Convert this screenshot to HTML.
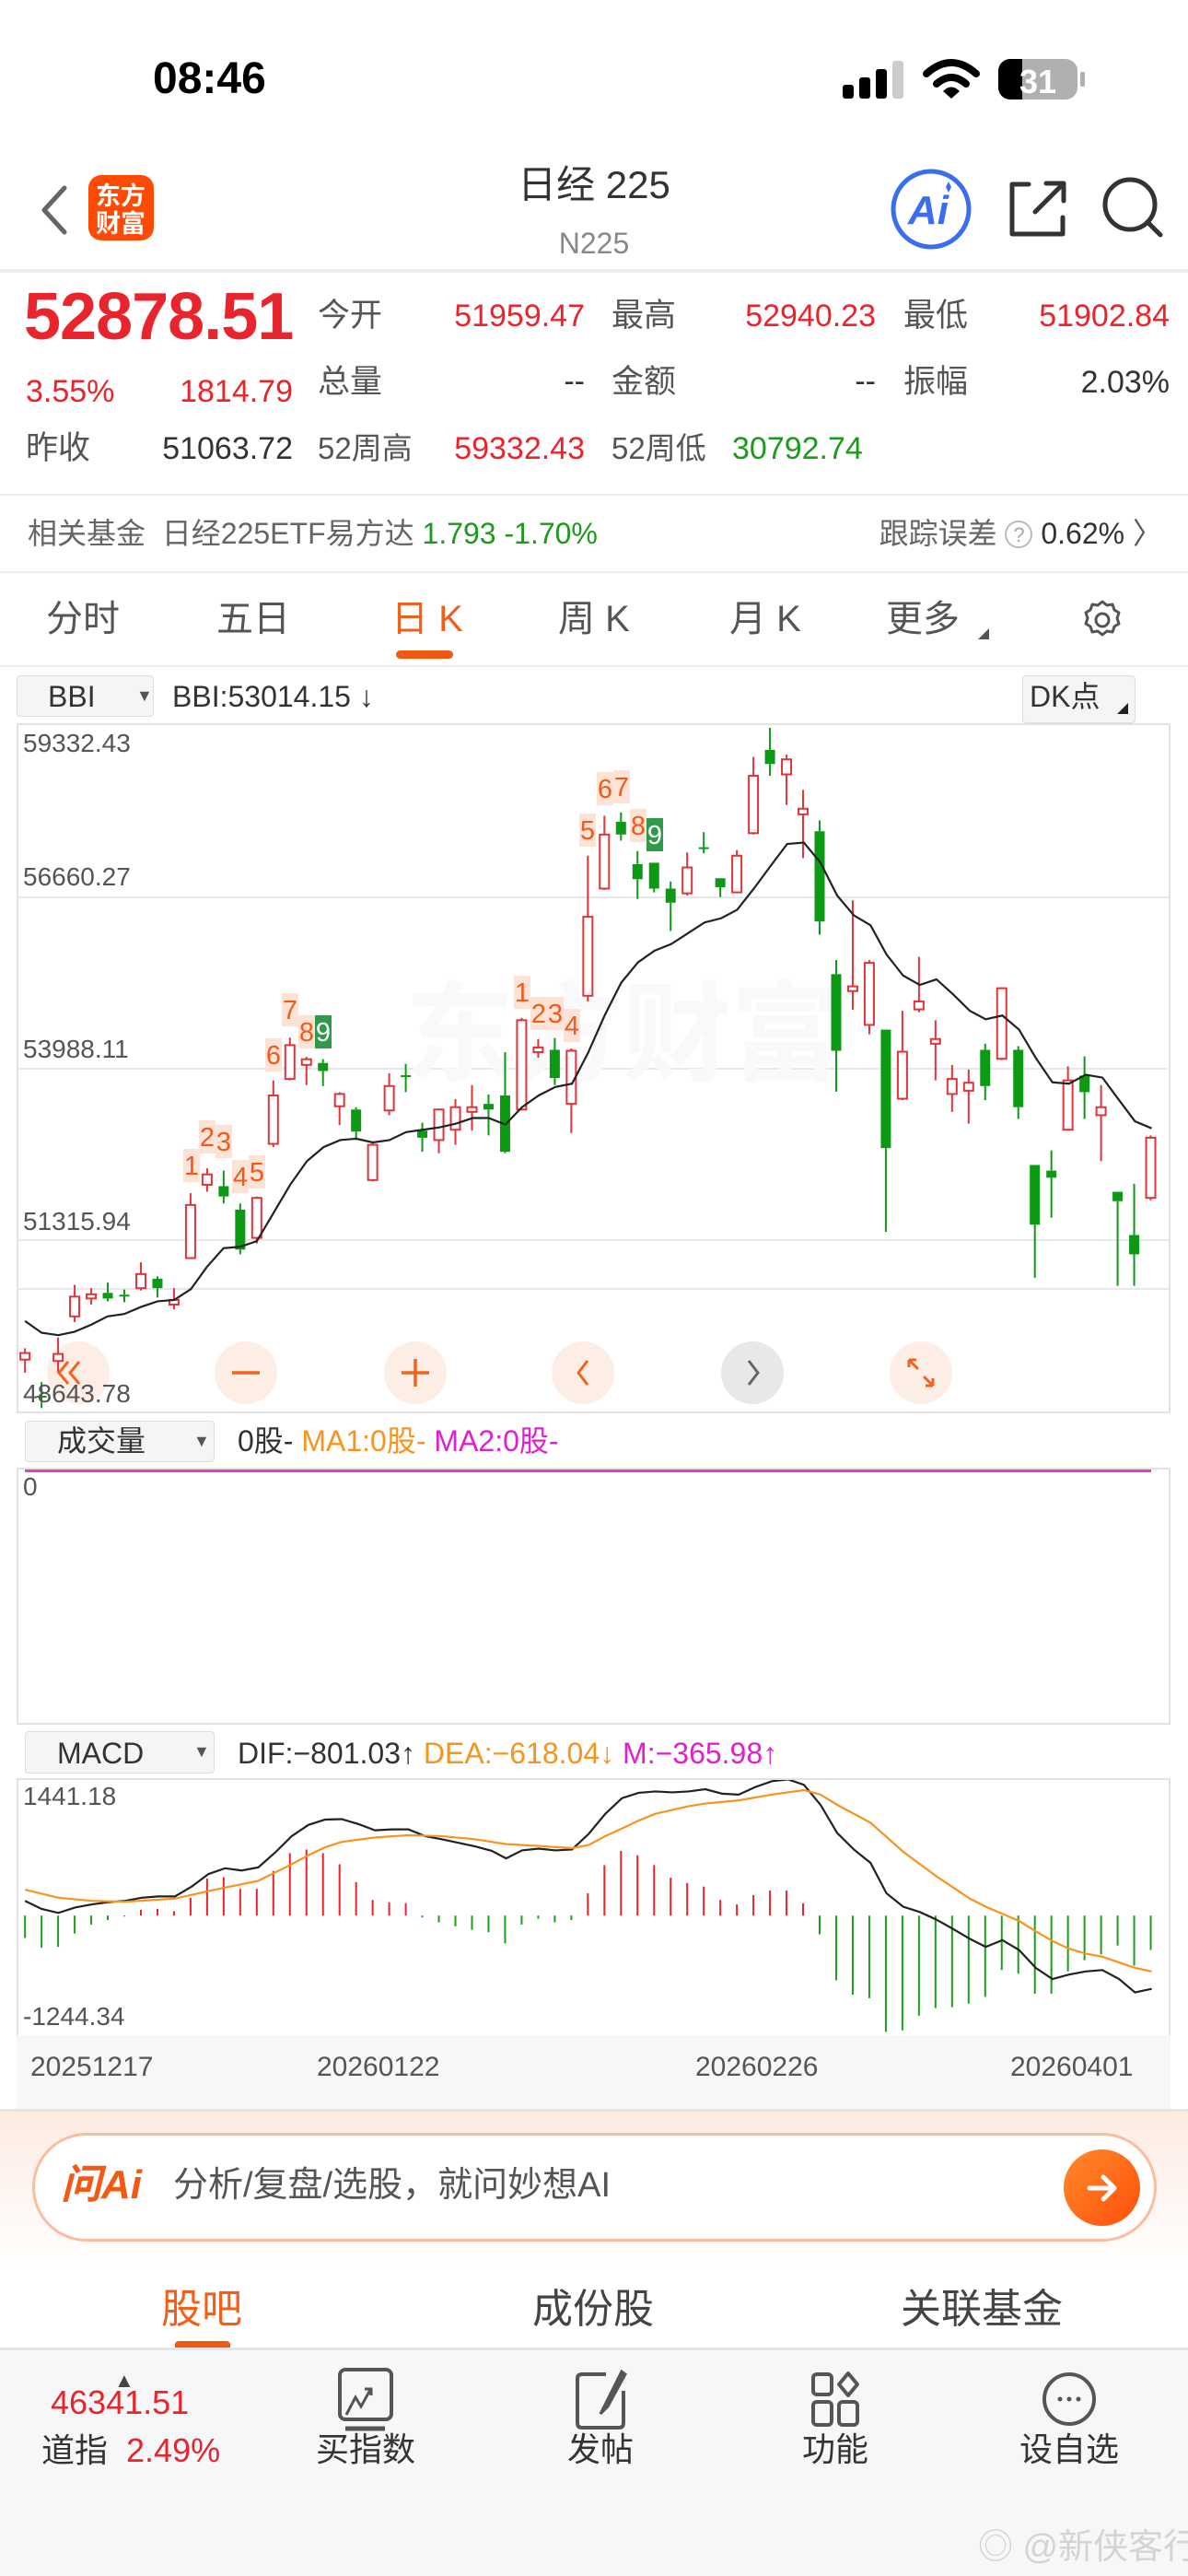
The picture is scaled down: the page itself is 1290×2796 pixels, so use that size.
<!DOCTYPE html>
<html><head><meta charset="utf-8">
<style>
*{margin:0;padding:0;box-sizing:border-box}
body{width:1290px;height:2796px;position:relative;background:#fff;font-family:"Liberation Sans","Noto Sans CJK SC",sans-serif;overflow:hidden;color:#333}
.a{position:absolute;white-space:nowrap;line-height:1}
.r{color:#e8242c}.g{color:#1c9a1c}.gy{color:#666}
</style></head><body>

<div class="a" style="left:166px;top:62px;font-size:48px;font-weight:bold;color:#000">08:46</div>
<svg class="a" style="left:0;top:0" width="1290" height="300">
  <rect x="915" y="92" width="12" height="15" rx="3" fill="#000"/>
  <rect x="933" y="84" width="12" height="23" rx="3" fill="#000"/>
  <rect x="951" y="75" width="12" height="32" rx="3" fill="#000"/>
  <rect x="969" y="66" width="12" height="41" rx="3" fill="#ccc"/>
  <path d="M1006 80 Q1033 56 1060 80" stroke="#000" stroke-width="8" fill="none" stroke-linecap="round"/>
  <path d="M1017 91 Q1033 77 1049 91" stroke="#000" stroke-width="8" fill="none" stroke-linecap="round"/>
  <path d="M1024 99 L1033 107 L1042 99 Q1033 90 1024 99Z" fill="#000"/>
  <rect x="1084" y="64" width="86" height="44" rx="13" fill="#b0b0b0"/>
  <path d="M1097 64 H1110 V108 H1097 A13 13 0 0 1 1084 95 V77 A13 13 0 0 1 1097 64Z" fill="#000"/>
  <rect x="1173" y="78" width="5" height="16" rx="2" fill="#b0b0b0"/>
  <text x="1127" y="101" font-size="36" font-weight="bold" fill="#fff" text-anchor="middle" font-family="Liberation Sans">31</text>
  <path d="M70 204 L48 228 L70 252" stroke="#666" stroke-width="5" fill="none" stroke-linecap="round" stroke-linejoin="round"/>
  <rect x="96" y="190" width="71" height="71" rx="14" fill="#fd4a05"/>
  <text x="131" y="222" font-size="27" font-weight="bold" fill="#fff" text-anchor="middle" font-family="Noto Sans CJK SC">东方</text>
  <text x="131" y="252" font-size="27" font-weight="bold" fill="#fff" text-anchor="middle" font-family="Noto Sans CJK SC">财富</text>
  <circle cx="1011" cy="227" r="41" stroke="#3a6df0" stroke-width="5" fill="none"/>
  <text x="1008" y="243" font-size="44" font-weight="bold" font-style="italic" fill="#3a6df0" text-anchor="middle" font-family="Liberation Sans">Ai</text>
  <path d="M1027 203 l3 -6 l3 6 l-3 6z" fill="#3a6df0"/>
  <path d="M1117 200 H1099 V254 H1154 V236 M1124 230 L1153 201 M1136 199 H1155 V218" stroke="#333" stroke-width="5" fill="none" stroke-linecap="round" stroke-linejoin="round"/>
  <circle cx="1227" cy="222" r="27" stroke="#333" stroke-width="5" fill="none"/>
  <path d="M1246 241 L1260 255" stroke="#333" stroke-width="5" stroke-linecap="round"/>
</svg>
<div class="a" style="left:0;width:1290px;top:180px;text-align:center;font-size:42px;color:#333">日经 225</div>
<div class="a" style="left:0;width:1290px;top:248px;text-align:center;font-size:32px;color:#888">N225</div>
<div class="a" style="left:0;top:292px;width:1290px;height:4px;background:#eee"></div>

<div class="a r" style="left:26px;top:308px;font-size:72px;font-weight:bold;letter-spacing:-1px">52878.51</div>
<div class="a" style="left:345px;top:325px;font-size:35px;color:#555">今开</div>
<div class="a r" style="right:655px;top:326px;font-size:34px">51959.47</div>
<div class="a" style="left:664px;top:325px;font-size:35px;color:#555">最高</div>
<div class="a r" style="right:339px;top:326px;font-size:34px">52940.23</div>
<div class="a" style="left:981px;top:325px;font-size:35px;color:#555">最低</div>
<div class="a r" style="right:20px;top:326px;font-size:34px">51902.84</div>

<div class="a r" style="left:28px;top:408px;font-size:34px">3.55%</div>
<div class="a r" style="right:972px;top:408px;font-size:34px">1814.79</div>
<div class="a" style="left:345px;top:397px;font-size:35px;color:#555">总量</div>
<div class="a" style="right:655px;top:397px;font-size:34px;color:#333">--</div>
<div class="a" style="left:664px;top:397px;font-size:35px;color:#555">金额</div>
<div class="a" style="right:339px;top:397px;font-size:34px;color:#333">--</div>
<div class="a" style="left:981px;top:397px;font-size:35px;color:#555">振幅</div>
<div class="a" style="right:20px;top:398px;font-size:34px;color:#333">2.03%</div>

<div class="a" style="left:28px;top:469px;font-size:35px;color:#555">昨收</div>
<div class="a" style="right:972px;top:470px;font-size:34px;color:#333">51063.72</div>
<div class="a" style="left:345px;top:470px;font-size:33px;color:#555">52周高</div>
<div class="a r" style="right:655px;top:470px;font-size:34px">59332.43</div>
<div class="a" style="left:664px;top:470px;font-size:33px;color:#555">52周低</div>
<div class="a g" style="left:795px;top:470px;font-size:34px">30792.74</div>
<div class="a" style="left:0;top:536px;width:1290px;height:2px;background:#eee"></div>

<div class="a" style="left:30px;top:563px;font-size:32px;color:#666">相关基金&nbsp; 日经225ETF易方达 <span class="g">1.793 -1.70%</span></div>
<div class="a" style="right:28px;top:563px;font-size:32px;color:#666">跟踪误差 <span style="display:inline-block;width:30px;height:30px;border:2px solid #bbb;border-radius:50%;font-size:22px;text-align:center;line-height:27px;color:#aaa;vertical-align:2px">?</span> <span style="color:#333">0.62%</span> <span style="color:#555">〉</span></div>
<div class="a" style="left:0;top:620px;width:1290px;height:2px;background:#eee"></div>

<div class="a" style="left:50px;top:652px;font-size:40px;color:#555">分时</div>
<div class="a" style="left:235px;top:652px;font-size:40px;color:#555">五日</div>
<div class="a" style="left:425px;top:652px;font-size:40px;color:#f0601a">日 K</div>
<div class="a" style="left:606px;top:652px;font-size:40px;color:#555">周 K</div>
<div class="a" style="left:792px;top:652px;font-size:40px;color:#555">月 K</div>
<div class="a" style="left:962px;top:652px;font-size:40px;color:#555">更多</div>
<svg class="a" style="left:1060px;top:680px" width="16" height="16"><path d="M14 2 V14 H2Z" fill="#555"/></svg>
<svg class="a" style="left:1172px;top:648px" width="50" height="50"><path d="M25 5 l5 4 6-1 2 6 5 3-2 6 2 6-5 3-2 6-6-1-5 4-5-4-6 1-2-6-5-3 2-6-2-6 5-3 2-6 6 1z" stroke="#555" stroke-width="3" fill="none" stroke-linejoin="round"/><circle cx="25" cy="25" r="7" stroke="#555" stroke-width="3" fill="none"/></svg>
<div class="a" style="left:430px;top:706px;width:62px;height:9px;border-radius:5px;background:#ee5a12"></div>
<div class="a" style="left:0;top:722px;width:1290px;height:2px;background:#eee"></div>

<div class="a" style="left:18px;top:733px;width:149px;height:45px;background:#f4f5f7;border:1px solid #ddd;border-radius:4px"></div>
<div class="a" style="left:52px;top:740px;font-size:32px;color:#333">BBI</div>
<div class="a" style="left:148px;top:746px;font-size:18px;color:#555">▼</div>
<div class="a" style="left:187px;top:740px;font-size:32px;color:#333">BBI:53014.15 ↓</div>
<div class="a" style="left:1110px;top:733px;width:123px;height:52px;background:#f4f5f7;border:1px solid #ddd;border-radius:4px"></div>
<div class="a" style="left:1118px;top:740px;font-size:32px;color:#333">DK点</div>
<svg class="a" style="left:1212px;top:762px" width="14" height="14"><path d="M13 1 V13 H1Z" fill="#222"/></svg>

<div class="a" style="left:18px;top:785px;width:1253px;height:749px;border:2px solid #e2e2e2"></div>
<div class="a" style="left:18px;top:973px;width:1253px;height:2px;background:#e6e8ec"></div>
<div class="a" style="left:18px;top:1159px;width:1253px;height:2px;background:#e6e8ec"></div>
<div class="a" style="left:18px;top:1345px;width:1253px;height:2px;background:#e6e8ec"></div>
<div class="a" style="left:18px;top:1398px;width:1253px;height:2px;background:#e6e8ec"></div>
<div class="a" style="left:440px;top:1065px;font-size:118px;color:#f9f9f9;font-weight:bold">东方财富</div>
<div class="a" style="left:25px;top:793px;font-size:28px;color:#555">59332.43</div>
<div class="a" style="left:25px;top:938px;font-size:28px;color:#555">56660.27</div>
<div class="a" style="left:25px;top:1125px;font-size:28px;color:#555">53988.11</div>
<div class="a" style="left:25px;top:1312px;font-size:28px;color:#555">51315.94</div>

<svg id="ch" class="a" style="left:0;top:0" width="1290" height="2796"></svg>
<div class="a" style="left:25px;top:1499px;font-size:28px;color:#555">48643.78</div>

<div class="a" style="left:27px;top:1542px;width:206px;height:45px;background:#f4f5f7;border:1px solid #ddd;border-radius:4px"></div>
<div class="a" style="left:62px;top:1548px;font-size:32px;color:#333">成交量</div>
<div class="a" style="left:210px;top:1555px;font-size:18px;color:#555">▼</div>
<div class="a" style="left:258px;top:1548px;font-size:32px;color:#333">0股- <span style="color:#f7941d">MA1:0股-</span> <span style="color:#e020d0">MA2:0股-</span></div>
<div class="a" style="left:18px;top:1593px;width:1253px;height:279px;border:2px solid #e2e2e2"></div>
<div class="a" style="left:27px;top:1595px;width:1223px;height:3px;background:#e83cc4"></div>
<div class="a" style="left:25px;top:1600px;font-size:28px;color:#555">0</div>

<div class="a" style="left:27px;top:1879px;width:206px;height:46px;background:#f4f5f7;border:1px solid #ddd;border-radius:4px"></div>
<div class="a" style="left:62px;top:1887px;font-size:32px;color:#333">MACD</div>
<div class="a" style="left:210px;top:1892px;font-size:18px;color:#555">▼</div>
<div class="a" style="left:258px;top:1887px;font-size:32px;color:#333">DIF:−801.03↑ <span style="color:#f7941d">DEA:−618.04↓</span> <span style="color:#e020d0">M:−365.98↑</span></div>
<div class="a" style="left:18px;top:1930px;width:1253px;height:280px;border:2px solid #e2e2e2;border-bottom:none"></div>
<div class="a" style="left:25px;top:1936px;font-size:28px;color:#555">1441.18</div>
<div class="a" style="left:25px;top:2175px;font-size:28px;color:#555">-1244.34</div>
<div class="a" style="left:18px;top:2209px;width:1253px;height:80px;background:#f6f7f9"></div>
<div class="a" style="left:33px;top:2229px;font-size:30px;color:#555">20251217</div>
<div class="a" style="left:344px;top:2229px;font-size:30px;color:#555">20260122</div>
<div class="a" style="left:755px;top:2229px;font-size:30px;color:#555">20260226</div>
<div class="a" style="left:1097px;top:2229px;font-size:30px;color:#555">20260401</div>
<div class="a" style="left:0;top:2289px;width:1290px;height:3px;background:#e4e4e4"></div>

<div class="a" style="left:0;top:2292px;width:1290px;height:170px;background:linear-gradient(#fdebe2,#fff)"></div>
<div class="a" style="left:35px;top:2315px;width:1221px;height:118px;border:3px solid #fbbd9e;border-radius:59px;background:#fff"></div>
<div class="a" style="left:66px;top:2350px;font-size:44px;font-weight:bold;font-style:italic;color:#f25a14">问Ai</div>
<div class="a" style="left:188px;top:2353px;font-size:38px;color:#555">分析/复盘/选股，就问妙想AI</div>
<div class="a" style="left:1155px;top:2333px;width:83px;height:83px;border-radius:50%;background:linear-gradient(135deg,#ff8a2a,#ff4f0a)"></div>
<svg class="a" style="left:1175px;top:2353px" width="44" height="44"><path d="M8 22 H34 M23 10 L35 22 L23 34" stroke="#fff" stroke-width="5" fill="none" stroke-linecap="round" stroke-linejoin="round"/></svg>

<div class="a" style="left:175px;top:2485px;font-size:44px;color:#f0601a">股吧</div>
<div class="a" style="left:578px;top:2485px;font-size:44px;color:#444">成份股</div>
<div class="a" style="left:978px;top:2485px;font-size:44px;color:#444">关联基金</div>
<div class="a" style="left:190px;top:2541px;width:60px;height:8px;border-radius:4px 4px 0 0;background:#ee5a12"></div>
<div class="a" style="left:0;top:2548px;width:1290px;height:248px;background:#f6f7f9;border-top:3px solid #e4e4e4"></div>

<div class="a" style="left:124px;top:2573px;font-size:22px;color:#444">▲</div>
<div class="a r" style="left:55px;top:2590px;font-size:36px">46341.51</div>
<div class="a" style="left:45px;top:2642px;font-size:36px;color:#333">道指 <span class="r">&nbsp;2.49%</span></div>
<svg class="a" style="left:0;top:2560px" width="1290" height="80">
  <rect x="369" y="12" width="56" height="54" rx="6" stroke="#555" stroke-width="4" fill="none"/>
  <path d="M376 61 L386 42 L392 52 L402 34 M396 33 H403 V40" stroke="#555" stroke-width="3" fill="none"/>
  <path d="M375 76 H418" stroke="#555" stroke-width="5"/>
  <path d="M658 17 H632 Q627 17 627 22 V70 Q627 75 632 75 H672 Q677 75 677 70 V35" stroke="#555" stroke-width="4" fill="none"/>
  <path d="M675 14 L657 50 L652 60 L660 52 L679 17Z" stroke="#555" stroke-width="3" fill="#555"/>
  <rect x="883" y="17" width="20" height="22" rx="4" stroke="#555" stroke-width="4" fill="none"/>
  <rect x="883" y="47" width="20" height="25" rx="4" stroke="#555" stroke-width="4" fill="none"/>
  <rect x="911" y="47" width="20" height="25" rx="4" stroke="#555" stroke-width="4" fill="none"/>
  <path d="M921 16 L931 28 L921 40 L911 28Z" stroke="#555" stroke-width="4" fill="none" stroke-linejoin="round"/>
  <circle cx="1161" cy="44" r="27" stroke="#555" stroke-width="4" fill="none"/>
  <circle cx="1151" cy="44" r="2.5" fill="#555"/><circle cx="1161" cy="44" r="2.5" fill="#555"/><circle cx="1171" cy="44" r="2.5" fill="#555"/>
</svg>
<div class="a" style="left:343px;top:2641px;font-size:36px;color:#333">买指数</div>
<div class="a" style="left:616px;top:2641px;font-size:36px;color:#333">发帖</div>
<div class="a" style="left:871px;top:2641px;font-size:36px;color:#333">功能</div>
<div class="a" style="left:1107px;top:2641px;font-size:36px;color:#333">设自选</div>
<div class="a" style="left:1062px;top:2746px;font-size:38px;color:#d4d4d4">◎ @新侠客行</div>

<script>
(function(){
var NS="http://www.w3.org/2000/svg",s=document.getElementById('ch');
function el(t,a){var e=document.createElementNS(NS,t);for(var k in a)e.setAttribute(k,a[k]);s.appendChild(e);return e;}
var R="#e0333a",G="#0c9a14";
function X(z){return z/1.2155;} function Y(z){return z/1.96+740;} function M(z){return z/2.063+1530;}
var c=[[1428,1442,1418,1470,'r'],[1519,1521,1490,1545,'g'],[1430,1445,1395,1470,'r'],[1308,1350,1283,1362,'r'],[1303,1312,1290,1325,'r'],[1300,1312,1278,1318,'g'],[1304,1306,1293,1320,'g'],[1260,1290,1235,1295,'r'],[1270,1290,1265,1310,'g'],[1315,1325,1290,1335,'r'],[1113,1226,1088,1228,'r'],[1048,1070,1035,1085,'r'],[1073,1095,1040,1110,'g'],[1123,1208,1110,1218,'g'],[1098,1183,1095,1195,'r'],[880,983,848,990,'r'],[773,845,757,848,'r'],[803,815,798,858,'r'],[811,828,803,860,'g'],[877,903,873,943,'r'],[910,957,905,975,'g'],[985,1060,978,1063,'r'],[860,912,833,922,'r'],[837,839,813,873,'g'],[955,970,938,1000,'g'],[910,975,908,1003,'r'],[905,953,888,985,'r'],[905,915,858,955,'r'],[898,910,878,965,'g'],[880,1000,788,1003,'g'],[720,910,715,912,'r'],[778,788,760,800,'r'],[783,843,758,858,'g'],[785,898,780,960,'r'],[500,668,370,680,'r'],[325,440,285,443,'r'],[298,325,278,338,'g'],[388,420,360,462,'g'],[385,440,385,448,'g'],[440,470,425,530,'g'],[395,450,363,455,'r'],[352,354,320,365,'g'],[418,437,418,458,'g'],[370,448,358,450,'r'],[200,322,160,325,'r'],[145,175,98,200,'g'],[165,197,155,262,'r'],[270,282,230,375,'r'],[318,510,295,538,'g'],[622,785,592,872,'g'],[648,658,465,698,'r'],[598,730,592,750,'r'],[740,992,740,1170,'g'],[787,887,700,890,'r'],[680,697,585,703,'r'],[760,770,720,848,'r'],[845,877,815,915,'r'],[853,870,825,940,'r'],[783,860,770,890,'g'],[652,802,650,805,'r'],[783,905,775,930,'g'],[1028,1155,1028,1268,'g'],[1040,1055,997,1140,'g'],[848,953,818,955,'r'],[838,873,797,930,'g'],[905,922,858,1020,'r'],[1085,1105,1085,1285,'g'],[1177,1218,1068,1285,'g'],[970,1098,965,1103,'r']];
var bx=[85,267,451,633,817,1000];
bx.forEach(function(x,i){el('circle',{cx:x,cy:1490,r:34,fill:i==4?'#e8e8e8':'#fdeee5'});});
for(var i=0;i<c.length;i++){var d=c[i],x=X(33+21.85*i),col=d[4]=='r'?R:G;
 var t=Y(d[0]),b=Y(d[1]);
 el('line',{x1:x,y1:Y(d[2]),x2:x,y2:t,stroke:col,'stroke-width':2});
 el('line',{x1:x,y1:b,x2:x,y2:Y(d[3]),stroke:col,'stroke-width':2});
 if(d[4]=='r')el('rect',{x:x-5,y:t,width:10,height:Math.max(b-t,2),fill:'#fff',stroke:col,'stroke-width':2});
 else el('rect',{x:x-5.5,y:t,width:11,height:Math.max(b-t,2),fill:col});}
var bb=[[33,1360],[55,1385],[77,1390],[98,1383],[120,1368],[142,1350],[164,1345],[186,1330],[208,1318],[230,1315],[252,1292],[273,1245],[295,1205],[317,1202],[339,1190],[361,1130],[383,1070],[405,1020],[427,990],[449,975],[470,972],[492,980],[514,975],[536,958],[558,953],[580,948],[602,940],[624,928],[645,928],[667,942],[689,905],[711,880],[733,862],[755,855],[776,790],[798,710],[820,640],[842,597],[864,572],[886,558],[908,535],[930,512],[952,503],[973,485],[995,440],[1017,392],[1039,345],[1061,342],[1083,385],[1105,455],[1127,497],[1149,518],[1170,580],[1192,625],[1214,645],[1236,633],[1258,665],[1280,700],[1301,718],[1323,710],[1345,740],[1367,800],[1389,852],[1411,855],[1433,836],[1455,842],[1477,890],[1498,935],[1520,950]];
el('polyline',{points:bb.map(function(p){return X(p[0])+','+Y(p[1]);}).join(' '),fill:'none',stroke:'#222','stroke-width':2.2});
var lb=[["1",208,1265],["2",225,1234],["3",243,1239],["4",261,1277],["5",279,1272],["6",297,1145],["7",315,1096],["8",333,1120],["9",351,1120,1],["1",567,1077],["2",585,1100],["3",603,1100],["4",621,1113],["5",638,901],["6",657,856],["7",675,854],["8",693,896],["9",711,906,1]];
lb.forEach(function(l){el('rect',{x:l[1]-9,y:l[2]-18,width:18,height:36,fill:l[3]?'#2e9a4a':'#fde3d6'});
 var t=el('text',{x:l[1],y:l[2]+10,'font-size':29,'text-anchor':'middle',fill:l[3]?'#fff':'#f05a1a','font-family':'Liberation Sans'});t.textContent=l[0];});
el('path',{d:'M74 1478 L64 1490 L74 1502 M86 1478 L76 1490 L86 1502',stroke:'#f0641e','stroke-width':3,fill:'none'});
el('path',{d:'M252 1490 H282',stroke:'#f0641e','stroke-width':3.5});
el('path',{d:'M436 1490 H466 M451 1475 V1505',stroke:'#f0641e','stroke-width':3.5});
el('path',{d:'M638 1477 L628 1490 L638 1503',stroke:'#f0641e','stroke-width':3,fill:'none'});
el('path',{d:'M813 1477 L823 1490 L813 1503',stroke:'#666','stroke-width':3,fill:'none'});
el('path',{d:'M987 1476 L997 1486 M987 1476 V1484 M987 1476 H995 M1013 1504 L1003 1494 M1013 1504 V1496 M1013 1504 H1005',stroke:'#f0641e','stroke-width':3,fill:'none'});
var h=[[1183,'g'],[1205,'g'],[1203,'g'],[1173,'g'],[1153,'g'],[1143,'g'],[1135,'g'],[1120,'r'],[1118,'r'],[1123,'r'],[1093,'r'],[1050,'r'],[1047,'r'],[1073,'r'],[1073,'r'],[1033,'r'],[993,'r'],[985,'r'],[993,'r'],[1018,'r'],[1058,'r'],[1098,'r'],[1103,'r'],[1105,'r'],[1137,'g'],[1148,'g'],[1157,'g'],[1165,'g'],[1170,'g'],[1195,'g'],[1153,'g'],[1140,'g'],[1148,'g'],[1143,'g'],[1083,'r'],[1020,'r'],[988,'r'],[998,'r'],[1020,'r'],[1048,'r'],[1060,'r'],[1068,'r'],[1098,'r'],[1108,'r'],[1087,'r'],[1077,'r'],[1077,'r'],[1105,'r'],[1175,'g'],[1278,'g'],[1310,'g'],[1318,'g'],[1393,'g'],[1390,'g'],[1357,'g'],[1340,'g'],[1338,'g'],[1330,'g'],[1315,'g'],[1255,'g'],[1263,'g'],[1308,'g'],[1308,'g'],[1258,'g'],[1233,'g'],[1220,'g'],[1200,'g'],[1245,'g'],[1210,'g']];
h.forEach(function(v,i){var x=X(33+21.85*i);el('line',{x1:x,y1:M(1133),x2:x,y2:M(v[0]),stroke:v[1]=='r'?'#e8232b':'#18a018','stroke-width':2});});
var dif=[[33,1100],[55,1118],[77,1127],[99,1115],[121,1108],[143,1103],[165,1100],[187,1093],[209,1090],[231,1090],[253,1068],[275,1040],[297,1027],[319,1032],[341,1025],[363,992],[385,955],[407,930],[429,918],[451,917],[473,928],[495,942],[517,940],[539,940],[561,955],[583,962],[605,970],[627,978],[649,988],[668,1005],[689,987],[711,983],[733,987],[755,985],[777,950],[799,905],[821,870],[843,858],[865,855],[887,857],[909,855],[931,850],[953,860],[975,862],[997,845],[1019,832],[1040,828],[1061,840],[1083,885],[1105,948],[1127,985],[1149,1015],[1170,1083],[1192,1113],[1214,1125],[1236,1142],[1258,1163],[1280,1185],[1301,1203],[1323,1188],[1345,1210],[1367,1250],[1389,1275],[1411,1265],[1433,1258],[1455,1255],[1477,1275],[1498,1305],[1520,1297]];
var dea=[[33,1075],[77,1093],[121,1100],[165,1102],[231,1095],[275,1078],[341,1055],[385,1018],[407,998],[429,980],[451,968],[495,958],[539,953],[583,955],[627,962],[668,973],[711,977],[755,982],[777,975],[799,955],[821,938],[843,920],[865,905],[909,888],[931,882],[975,875],[1019,862],[1061,852],[1083,862],[1105,885],[1149,925],[1192,990],[1236,1045],[1280,1095],[1301,1113],[1345,1145],[1367,1168],[1389,1190],[1411,1207],[1433,1218],[1455,1225],[1477,1238],[1498,1250],[1520,1258]];
el('polyline',{points:dif.map(function(p){return X(p[0])+','+M(p[1]);}).join(' '),fill:'none',stroke:'#222','stroke-width':2.2});
el('polyline',{points:dea.map(function(p){return X(p[0])+','+M(p[1]);}).join(' '),fill:'none',stroke:'#f7941d','stroke-width':2.2});
for(var k=0;k<56;k++){var x=205+18.05*k;var big=(x>420&&x<424)||(x>834&&x<840);el('line',{x1:x,y1:2209,x2:x,y2:big?2232:2220,stroke:'#bbb','stroke-width':big?2:1.5});}
})();
</script>
</body></html>
